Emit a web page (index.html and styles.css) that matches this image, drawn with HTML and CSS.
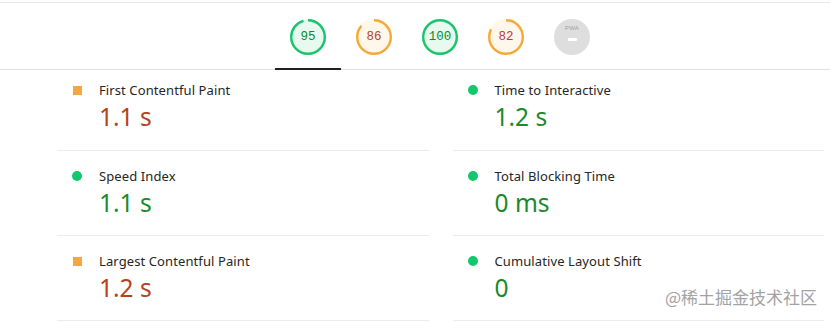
FILE: index.html
```html
<!DOCTYPE html>
<html lang="en">
<head>
<meta charset="utf-8">
<title>Lighthouse metrics</title>
<link rel="stylesheet" href="styles.css">
</head>
<body>
<header class="topbar">
  <nav class="tabs">
    <div class="tab active">
      <div class="gauge pass">
        <svg viewBox="0 0 120 120"><circle class="base" cx="60" cy="60" r="56"/><circle class="arc" cx="60" cy="60" r="56" style="stroke-dasharray: 334.3 351.9"/></svg>
        <span class="score">95</span>
      </div>
    </div>
    <div class="tab">
      <div class="gauge average">
        <svg viewBox="0 0 120 120"><circle class="base" cx="60" cy="60" r="56"/><circle class="arc" cx="60" cy="60" r="56" style="stroke-dasharray: 302.6 351.9"/></svg>
        <span class="score">86</span>
      </div>
    </div>
    <div class="tab">
      <div class="gauge pass">
        <svg viewBox="0 0 120 120"><circle class="base" cx="60" cy="60" r="56"/><circle class="arc" cx="60" cy="60" r="56" style="stroke-dasharray: 351.9 351.9"/></svg>
        <span class="score">100</span>
      </div>
    </div>
    <div class="tab">
      <div class="gauge average">
        <svg viewBox="0 0 120 120"><circle class="base" cx="60" cy="60" r="56"/><circle class="arc" cx="60" cy="60" r="56" style="stroke-dasharray: 288.5 351.9"/></svg>
        <span class="score">82</span>
      </div>
    </div>
    <div class="tab">
      <div class="pwa">
        <span class="pwa-label">PWA</span>
        <span class="pwa-dash"></span>
      </div>
    </div>
  </nav>
</header>

<main class="metrics">
  <div class="metric first">
    <span class="icon square"></span>
    <div class="text">
      <div class="label">First Contentful Paint</div>
      <div class="value avg">1.1 s</div>
    </div>
  </div>
  <div class="metric first">
    <span class="icon dot"></span>
    <div class="text">
      <div class="label">Time to Interactive</div>
      <div class="value good">1.2 s</div>
    </div>
  </div>
  <div class="metric">
    <span class="icon dot"></span>
    <div class="text">
      <div class="label">Speed Index</div>
      <div class="value good">1.1 s</div>
    </div>
  </div>
  <div class="metric">
    <span class="icon dot"></span>
    <div class="text">
      <div class="label">Total Blocking Time</div>
      <div class="value good">0 ms</div>
    </div>
  </div>
  <div class="metric">
    <span class="icon square"></span>
    <div class="text">
      <div class="label">Largest Contentful Paint</div>
      <div class="value avg">1.2 s</div>
    </div>
  </div>
  <div class="metric">
    <span class="icon dot"></span>
    <div class="text">
      <div class="label">Cumulative Layout Shift</div>
      <div class="value good">0</div>
    </div>
  </div>
</main>

<div class="watermark">@稀土掘金技术社区</div>
</body>
</html>
```

FILE: styles.css
```css
* { box-sizing: border-box; }

html, body {
  margin: 0;
  padding: 0;
  background: #ffffff;
}

body {
  font-family: "Noto Sans", "Open Sans", sans-serif;
  color: #212121;
  width: 830px;
  height: 322px;
  overflow: hidden;
  position: relative;
}

.topbar {
  margin-top: 2px;
  border-top: 1px solid #e8e8e8;
  border-bottom: 1px solid #e0e0e0;
  padding: 0 6px 0 57px;
  height: 68px;
}

.tabs {
  display: flex;
  justify-content: center;
  height: 67px;
  margin-left: -1px;
}

.tab {
  width: 66px;
  height: 67px;
  padding-top: 16px;
  display: flex;
  justify-content: center;
  align-items: flex-start;
  border-bottom: 2px solid transparent;
}

.tab.active {
  border-bottom-color: #202020;
}

.gauge {
  position: relative;
  width: 36px;
  height: 36px;
}

.gauge svg {
  width: 36px;
  height: 36px;
  display: block;
}

.gauge circle {
  stroke-width: 8;
}

.gauge .arc {
  fill: none;
  transform: rotate(-90deg);
  transform-origin: 60px 60px;
}

.gauge.pass .base { fill: #e8f9ef; stroke: #e8f9ef; }
.gauge.pass .arc { stroke: #18c46c; }
.gauge.pass .score { color: #0b8a2a; }

.gauge.average .base { fill: #fff7ea; stroke: #fff7ea; }
.gauge.average .arc { stroke: #f5a93a; }
.gauge.average .score { color: #b8431e; }

.score {
  position: absolute;
  inset: 0;
  display: flex;
  align-items: center;
  justify-content: center;
  font-family: "Liberation Mono", "DejaVu Sans Mono", monospace;
  font-size: 12.5px;
}

.pwa {
  width: 36px;
  height: 36px;
  border-radius: 50%;
  background: #dedede;
  display: flex;
  flex-direction: column;
  align-items: center;
  padding-top: 6px;
}

.pwa-label {
  font-family: "Liberation Sans", sans-serif;
  font-size: 6px;
  line-height: 7px;
  color: #9e9e9e;
  letter-spacing: 0.2px;
}

.pwa-dash {
  margin-top: 6px;
  width: 9px;
  height: 3px;
  border-radius: 1px;
  background: #ffffff;
}

.metrics {
  display: grid;
  grid-template-columns: 1fr 1fr;
  column-gap: 24px;
  padding: 0 6px 0 57px;
}

.metric {
  display: flex;
  align-items: flex-start;
  padding: 16px 0 17px 14px;
  border-bottom: 1px solid #ececec;
  height: 85px;
}

.metric.first {
  padding-top: 11px;
  height: 81px;
}

.icon {
  flex: none;
  width: 12px;
  height: 18px;
  display: flex;
  align-items: center;
  justify-content: center;
  margin-right: 16px;
}

.icon::before {
  content: "";
  display: block;
}

.icon.square::before {
  width: 9px;
  height: 9px;
  background: #f4a73e;
}

.icon.dot::before {
  width: 10px;
  height: 10px;
  border-radius: 50%;
  background: #12c86c;
}

.label {
  font-size: 13px;
  line-height: 18px;
  color: #262626;
  letter-spacing: 0.1px;
}

.value {
  margin-top: 3px;
  font-size: 24.5px;
  line-height: 30px;
}

.value.avg { color: #b8401c; }
.value.good { color: #1a8a2c; }

.watermark {
  position: absolute;
  right: 13px;
  top: 286px;
  font-family: "Noto Sans CJK SC", sans-serif;
  font-size: 17px;
  line-height: 22px;
  color: #a3a3a3;
  text-shadow: 0 0 1px #ffffff;
}
```
